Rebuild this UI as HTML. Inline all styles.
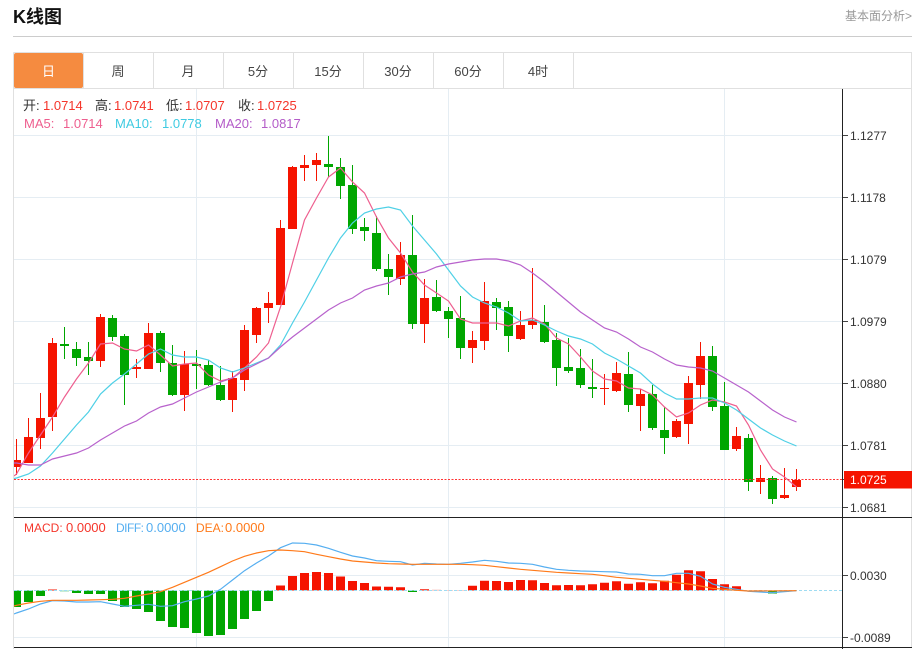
<!DOCTYPE html>
<html><head><meta charset="utf-8">
<style>
html,body{margin:0;padding:0;background:#fff;}
body{width:921px;height:649px;position:relative;overflow:hidden;font-family:"Liberation Sans","Noto Sans CJK SC",sans-serif;}
.t{position:absolute;white-space:nowrap;line-height:18px;height:18px;}
.f{font-size:13px;}
.s{font-size:12px;}
.tab{position:absolute;top:53px;height:35px;line-height:37px;width:70px;text-align:center;font-size:13px;color:#444;}
.ax{position:absolute;left:850px;font-size:12px;line-height:14px;color:#333;white-space:nowrap;}
svg{position:absolute;left:0;top:0;}
</style></head>
<body>
<svg width="921" height="649" viewBox="0 0 921 649" fill="none">
<defs><clipPath id="c"><rect x="14" y="89" width="828" height="558"/></clipPath></defs>
<path d="M13 36.5H912" stroke="#ccc"/>
<path d="M13.5 52.5H911.5V647M13.5 52.5V649M14 88.5H912" stroke="#e0e0e0"/>
<rect x="14" y="53" width="69" height="35" rx="2" fill="#f58b40"/>
<path d="M83.5 53V88M153.5 53V88M223.5 53V88M293.5 53V88M363.5 53V88M433.5 53V88M503.5 53V88M573.5 53V88" stroke="#e0e0e0"/>
<path d="M14 135.5H842M14 197.5H842M14 259.5H842M14 321.5H842M14 383.5H842M14 445.5H842M14 507.5H842M14 575.5H842M14 637.5H842M196.5 89V647M448.5 89V647M724.5 89V647" stroke="#e5edf3"/>
<g clip-path="url(#c)">
<path stroke="#f51400" d="M16.5 439V475M28.5 418V463M40.5 393V449M52.5 338V431M100.5 314V367M136.5 359V378M148.5 323V369M184.5 351V411M232.5 371V412M244.5 325V391M256.5 307V343M268.5 292V323M280.5 220V305M292.5 166V229M304.5 155V181M316.5 153V181M400.5 242V285M424.5 279V343M472.5 331V363M484.5 282V350M520.5 311V340M532.5 268V329M604.5 374V405M616.5 362V392M640.5 389V431M676.5 419V438M688.5 376V444M700.5 342V399M736.5 427V451M760.5 465V494M784.5 468V499M796.5 469V491"/>
<path stroke="#f51400" stroke-width="9" d="M16.5 460V467M28.5 437V463M40.5 418V438M52.5 343V417M100.5 317V361M136.5 367V369M148.5 333V369M184.5 364V395M232.5 378V400M244.5 330V380M256.5 308V335M268.5 303V308M280.5 228V305M292.5 167V229M304.5 165V168M316.5 160V165M400.5 255V279M424.5 298V324M472.5 340V348M484.5 301V341M520.5 325V339M532.5 320V325M604.5 388V389M616.5 373V391M640.5 394V406M676.5 421V437M688.5 383V424M700.5 356V385M736.5 436V449M760.5 478V482M784.5 495V498M796.5 480V487"/>
<path stroke="#00a600" d="M64.5 327V359M76.5 342V366M88.5 342V375M112.5 315V341M124.5 334V405M160.5 331V372M172.5 345V396M196.5 350V389M208.5 360V386M220.5 366V401M328.5 136V177M340.5 158V199M352.5 165V234M364.5 218V241M376.5 216V271M388.5 254V295M412.5 215V329M436.5 280V312M448.5 307V338M460.5 296V359M496.5 298V330M508.5 301V352M544.5 305V343M556.5 333V386M568.5 338V373M580.5 349V388M592.5 359V398M628.5 352V412M652.5 385V430M664.5 407V454M712.5 346V411M724.5 382V450M748.5 434V491M772.5 476V504"/>
<path stroke="#00a600" stroke-width="9" d="M64.5 344V346M76.5 349V358M88.5 357V361M112.5 318V337M124.5 336V375M160.5 333V363M172.5 363V395M196.5 364V366M208.5 365V385M220.5 385V400M328.5 164V167M340.5 167V186M352.5 185V229M364.5 227V231M376.5 233V269M388.5 269V277M412.5 255V324M436.5 297V311M448.5 311V319M460.5 318V348M496.5 302V308M508.5 307V336M544.5 322V342M556.5 340V368M568.5 367V371M580.5 368V385M592.5 387V389M628.5 374V405M652.5 394V428M664.5 430V438M712.5 356V407M724.5 406V450M748.5 438V482M772.5 478V499"/>
<path stroke="#ee5f8f" stroke-width="1.2" d="M14 476L16.5 474L28.5 453L40.5 435L52.5 417L64.5 397L76.5 379L88.5 363L100.5 344L112.5 343L124.5 349L136.5 351L148.5 345L160.5 355L172.5 366L184.5 364L196.5 363L208.5 375L220.5 381L232.5 378L244.5 368L256.5 357L268.5 343L280.5 307L292.5 263L304.5 220L316.5 198L328.5 177L340.5 168L352.5 182L364.5 193L376.5 217L388.5 238L400.5 253L412.5 272L424.5 285L436.5 293L448.5 301L460.5 319L472.5 323L484.5 323L496.5 323L508.5 326L520.5 321L532.5 318L544.5 324L556.5 338L568.5 344L580.5 357L592.5 371L604.5 379L616.5 381L628.5 388L640.5 389L652.5 395L664.5 407L676.5 417L688.5 413L700.5 405L712.5 400L724.5 402L736.5 406L748.5 425L760.5 450L772.5 469L784.5 477L796.5 487"/>
<path stroke="#4fd0e6" stroke-width="1.2" d="M14 478.5L16.5 478L28.5 474L40.5 466L52.5 453L64.5 439L76.5 425L88.5 412L100.5 394L112.5 383L124.5 374L136.5 364L148.5 354L160.5 349L172.5 355L184.5 357L196.5 357L208.5 360L220.5 368L232.5 372L244.5 368L256.5 363L268.5 358L280.5 345L292.5 323L304.5 302L316.5 280L328.5 258L340.5 238L352.5 223L364.5 213L376.5 209L388.5 207L400.5 210L412.5 226L424.5 240L436.5 254L448.5 270L460.5 286L472.5 297L484.5 303L496.5 307L508.5 313L520.5 321L532.5 320L544.5 325L556.5 331L568.5 336L580.5 339L592.5 344L604.5 353L616.5 359L628.5 366L640.5 373L652.5 384L664.5 393L676.5 399L688.5 399L700.5 398L712.5 398L724.5 403L736.5 410L748.5 419L760.5 428L772.5 435L784.5 441L796.5 446"/>
<path stroke="#b862cc" stroke-width="1.2" d="M14 463L16.5 463L28.5 465L40.5 465L52.5 459L64.5 456L76.5 453L88.5 448L100.5 440L112.5 433L124.5 426L136.5 421L148.5 413L160.5 407L172.5 404L184.5 398L196.5 392L208.5 387L220.5 382L232.5 378L244.5 370L256.5 364L268.5 358L280.5 347L292.5 337L304.5 328L316.5 319L328.5 310L340.5 303L352.5 298L364.5 290L376.5 286L388.5 283L400.5 277L412.5 274L424.5 272L436.5 267L448.5 264L460.5 262L472.5 260L484.5 259L496.5 259L508.5 261L520.5 265L532.5 273L544.5 282L556.5 292L568.5 302L580.5 312L592.5 320L604.5 328L616.5 332L628.5 339L640.5 347L652.5 352L664.5 359L676.5 365L688.5 367L700.5 368L712.5 371L724.5 378L736.5 385L748.5 392L760.5 401L772.5 410L784.5 417L796.5 422"/>
<path stroke="#f33" stroke-dasharray="2 1.5" d="M14 479.5H842"/>
<path stroke="#00a600" stroke-width="9" d="M16.5 590.5V607M28.5 590.5V602M40.5 590.5V596M76.5 590.5V593M88.5 590.5V594M100.5 590.5V594M112.5 590.5V601M124.5 590.5V607M136.5 590.5V609M148.5 590.5V612M160.5 590.5V621M172.5 590.5V627M184.5 590.5V628M196.5 590.5V633M208.5 590.5V636M220.5 590.5V635M232.5 590.5V629M244.5 590.5V619M256.5 590.5V611M268.5 590.5V601M412.5 590.5V592M772.5 590.5V593.5"/>
<path stroke="#8fd8a8" stroke-width="9" d="M64.5 590.5V591.5M748.5 590.5V591M760.5 590.5V591.5M784.5 590.5V592"/>
<path stroke="#f7a39c" stroke-width="9" d="M436.5 589.8V590.5M448.5 590V590.5M460.5 590V590.5"/>
<path stroke="#f51400" stroke-width="9" d="M52.5 589.5V590.5M280.5 585.5V590.5M292.5 576V590.5M304.5 573V590.5M316.5 572V590.5M328.5 573V590.5M340.5 576.5V590.5M352.5 581V590.5M364.5 583V590.5M376.5 586.5V590.5M388.5 586.8V590.5M400.5 587.3V590.5M424.5 589.3V590.5M472.5 585.8V590.5M484.5 580.8V590.5M496.5 581V590.5M508.5 582V590.5M520.5 580V590.5M532.5 580.3V590.5M544.5 583V590.5M556.5 585.3V590.5M568.5 585V590.5M580.5 585.3V590.5M592.5 584.3V590.5M604.5 582.7V590.5M616.5 581.3V590.5M628.5 583.7V590.5M640.5 582.3V590.5M652.5 583.3V590.5M664.5 580.7V590.5M676.5 574.7V590.5M688.5 570.3V590.5M700.5 571.3V590.5M712.5 579V590.5M724.5 584.3V590.5M736.5 586.3V590.5"/>
<path stroke="#9fdcf2" stroke-dasharray="3 2" d="M14 590.5H842"/>
<path stroke="#55aef0" stroke-width="1.2" d="M14 614L16.5 613L28.5 609L40.5 604L52.5 600.7L64.5 601L76.5 602L88.5 602L100.5 601.7L112.5 604L124.5 606.3L136.5 605.3L148.5 604.3L160.5 606.3L172.5 605.7L184.5 601.7L196.5 599L208.5 596L220.5 589.3L232.5 580L244.5 570.7L256.5 563L268.5 556L280.5 547.7L292.5 543L304.5 543.3L316.5 545L328.5 548.3L340.5 552.3L352.5 556L364.5 558L376.5 560.7L388.5 561.3L400.5 561.7L412.5 565L424.5 563.3L436.5 564L448.5 564.3L460.5 563.3L472.5 562L484.5 560.3L496.5 561.3L508.5 563L520.5 563.3L532.5 564.3L544.5 567L556.5 569.3L568.5 570.3L580.5 571L592.5 571.3L604.5 571.7L616.5 572L628.5 574L640.5 574.3L652.5 575.7L664.5 575.7L676.5 573.3L688.5 573.3L700.5 576.3L712.5 584L724.5 587.3L736.5 589.3L748.5 591.3L760.5 592L772.5 592.7L784.5 591.7L796.5 590.7"/>
<path stroke="#ff7a1a" stroke-width="1.2" d="M14 606L16.5 605.3L28.5 603L40.5 601.3L52.5 600.3L64.5 600.3L76.5 600.3L88.5 600L100.5 599.7L112.5 599.3L124.5 598.3L136.5 596L148.5 594L160.5 591.7L172.5 587.3L184.5 582.3L196.5 577.3L208.5 572.3L220.5 566.7L232.5 561L244.5 556.3L256.5 553L268.5 550.7L280.5 550L292.5 550.7L304.5 551.7L316.5 554.3L328.5 556.7L340.5 559L352.5 561L364.5 562L376.5 563L388.5 563.7L400.5 564L412.5 564.3L460.5 564.3L472.5 564.7L484.5 565.3L496.5 566.7L508.5 568L520.5 569.3L532.5 570.3L544.5 571.3L556.5 572.3L568.5 573L580.5 573.7L592.5 574.3L604.5 575.7L616.5 577.3L628.5 578.3L640.5 579.3L652.5 580.3L664.5 581.3L676.5 582.7L688.5 584L700.5 586L712.5 588.3L724.5 589.3L736.5 590.3L748.5 591L796.5 590.7"/>
</g>
<path stroke="#222" d="M842.5 89V649M14 517.5H912M14 647.5H912"/>
<path stroke="#444" d="M843 135.5H848M843 197.5H848M843 259.5H848M843 321.5H848M843 383.5H848M843 445.5H848M843 507.5H848M843 479.5H848M843 575.5H848M843 637.5H848"/>
<rect x="844" y="471" width="68" height="17.5" fill="#f51400"/>
</svg>

<div class="t" style="left:13px;top:6px;height:22px;line-height:22px;font-size:18px;font-weight:bold;color:#111;">K线图</div>
<div class="t" style="left:845px;top:7px;font-size:12px;color:#999;">基本面分析&gt;</div>

<div class="tab" style="left:14px;width:69px;color:#fff;">日</div>
<div class="tab" style="left:83px;">周</div>
<div class="tab" style="left:153px;">月</div>
<div class="tab" style="left:223px;">5分</div>
<div class="tab" style="left:293px;">15分</div>
<div class="tab" style="left:363px;">30分</div>
<div class="tab" style="left:433px;">60分</div>
<div class="tab" style="left:503px;">4时</div>

<div class="t f" style="left:23px;top:97px;color:#333;">开:</div>
<div class="t f" style="left:43px;top:97px;color:#f5352a;">1.0714</div>
<div class="t f" style="left:95px;top:97px;color:#333;">高:</div>
<div class="t f" style="left:114px;top:97px;color:#f5352a;">1.0741</div>
<div class="t f" style="left:166px;top:97px;color:#333;">低:</div>
<div class="t f" style="left:185px;top:97px;color:#f5352a;">1.0707</div>
<div class="t f" style="left:238px;top:97px;color:#333;">收:</div>
<div class="t f" style="left:257px;top:97px;color:#f5352a;">1.0725</div>

<div class="t f" style="left:24px;top:115px;color:#ee5f8f;">MA5:</div>
<div class="t f" style="left:63px;top:115px;color:#ee5f8f;">1.0714</div>
<div class="t f" style="left:115px;top:115px;color:#3fcbe2;">MA10:</div>
<div class="t f" style="left:162px;top:115px;color:#3fcbe2;">1.0778</div>
<div class="t f" style="left:215px;top:115px;color:#b45cc8;">MA20:</div>
<div class="t f" style="left:261px;top:115px;color:#b45cc8;">1.0817</div>

<div class="t s" style="left:24px;top:519px;color:#f5352a;">MACD:</div>
<div class="t f" style="left:66px;top:519px;color:#f5352a;">0.0000</div>
<div class="t s" style="left:116px;top:519px;letter-spacing:-.5px;color:#55aef0;">DIFF:</div>
<div class="t f" style="left:146px;top:519px;color:#55aef0;">0.0000</div>
<div class="t s" style="left:196px;top:519px;color:#ff7a1a;">DEA:</div>
<div class="t f" style="left:225px;top:519px;color:#ff7a1a;">0.0000</div>

<div class="ax" style="top:129px;">1.1277</div>
<div class="ax" style="top:191px;">1.1178</div>
<div class="ax" style="top:253px;">1.1079</div>
<div class="ax" style="top:315px;">1.0979</div>
<div class="ax" style="top:377px;">1.0880</div>
<div class="ax" style="top:439px;">1.0781</div>
<div class="ax" style="top:473px;color:#fff;">1.0725</div>
<div class="ax" style="top:501px;">1.0681</div>
<div class="ax" style="top:569px;">0.0030</div>
<div class="ax" style="top:631px;">-0.0089</div>
</body></html>
